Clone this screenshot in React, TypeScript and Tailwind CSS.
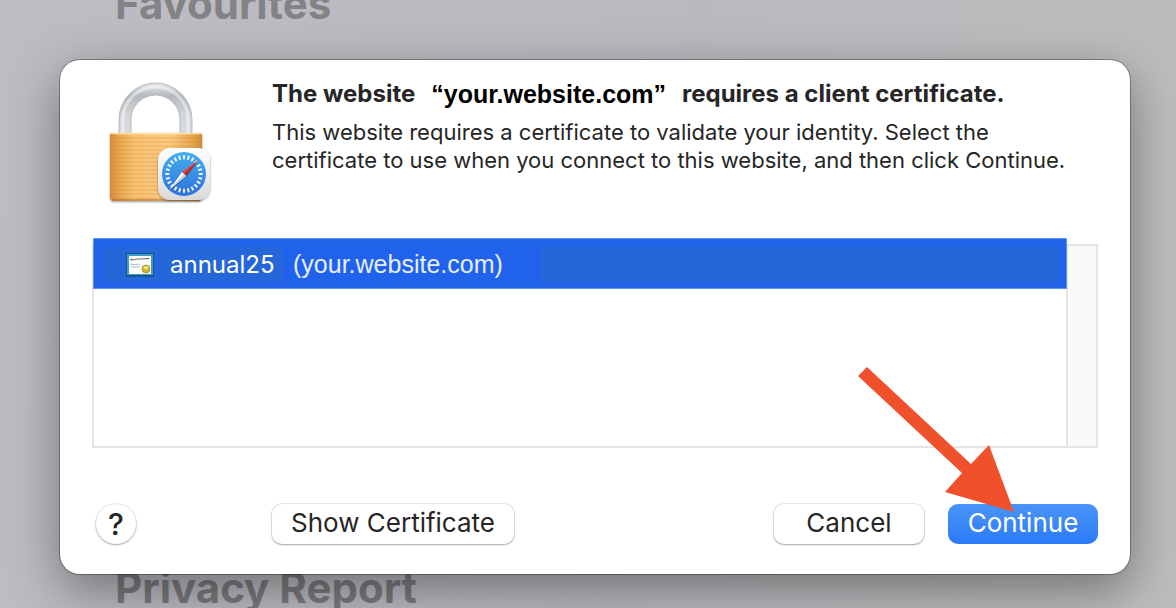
import React from 'react';

const buttonBase =
  'flex h-10 items-center justify-center rounded-[10px] pb-0.5 text-[26px] leading-8';
const buttonPlain =
  'bg-white text-[#262626] shadow-[0_0_0_1px_rgba(0,0,0,0.08),0_1px_2px_rgba(0,0,0,0.3)]';

const ticks = Array.from({ length: 24 }, (_, i) => i * 15);
const grooves = Array.from({ length: 16 }, (_, i) => 57 + i * 4);

const LockIcon: React.FC = () => (
  <svg viewBox="-1 -1 104 124" className="h-[124px] w-[104px] shrink-0" aria-hidden="true">
    <defs>
      <linearGradient id="steel" x1="0" y1="0" x2="0" y2="1">
        <stop offset="0" stopColor="#e9ebed" />
        <stop offset="0.25" stopColor="#b4b9be" />
        <stop offset="0.6" stopColor="#d2d6da" />
        <stop offset="1" stopColor="#d8dbdf" />
      </linearGradient>
      <linearGradient id="brass" x1="0" y1="0" x2="1" y2="0">
        <stop offset="0" stopColor="#d08d35" />
        <stop offset="0.08" stopColor="#e7a34c" />
        <stop offset="0.25" stopColor="#f8c273" />
        <stop offset="0.65" stopColor="#fccb82" />
        <stop offset="0.88" stopColor="#eaa954" />
        <stop offset="1" stopColor="#d08c35" />
      </linearGradient>
      <linearGradient id="tile" x1="0" y1="0" x2="0" y2="1">
        <stop offset="0" stopColor="#ffffff" />
        <stop offset="1" stopColor="#d9d9da" />
      </linearGradient>
      <linearGradient id="dial" x1="0" y1="0" x2="0" y2="1">
        <stop offset="0" stopColor="#45b0ee" />
        <stop offset="1" stopColor="#2f70dc" />
      </linearGradient>
      <filter id="soft" x="-20%" y="-20%" width="140%" height="150%">
        <feDropShadow dx="0" dy="1" stdDeviation="1" floodOpacity="0.4" />
      </filter>
    </defs>

    {/* Shackle */}
    <path
      d="M10 54V38.500a36.500 36.500 0 0 1 73 0V54H71V38.500a24.500 24.500 0 0 0-49 0V54Z"
      fill="url(#steel)"
      stroke="#a7abb0"
      strokeWidth="0.8"
    />
    <path d="M14 54V38.500a32.500 32.500 0 0 1 65 0V54" fill="none" stroke="#fff" strokeWidth="3" opacity="0.45" />

    {/* Body */}
    <g transform="translate(1 0)">
      <path d="M0 52h92v64a4 4 0 0 1-4 4H4a4 4 0 0 1-4-4Z" fill="url(#brass)" filter="url(#soft)" />
      {grooves.map((y) => (
        <path key={y} d={`M0 ${y}h92`} stroke="#c9822b" strokeWidth="1" opacity="0.4" />
      ))}
      <path d="M0 52.500h92" stroke="#ffe3ad" strokeWidth="1.500" />
      <path d="M2 119h88" stroke="#a7662a" strokeWidth="1.500" opacity="0.7" />
    </g>

    {/* Safari badge */}
    <g transform="translate(1 1)">
      <rect x="48" y="66" width="52" height="52" rx="12" fill="url(#tile)" filter="url(#soft)" />
      <circle cx="74" cy="92" r="22" fill="url(#dial)" />
      {ticks.map((angle) => (
        <path
          key={angle}
          d="M74 73.200v4"
          stroke="#fff"
          strokeWidth="2"
          opacity="0.9"
          transform={`rotate(${angle} 74 92)`}
        />
      ))}
      <path d="M61 108L76.500 95L88.500 80L72 91Z" fill="#1d4c94" opacity="0.4" />
      <path d="M88.500 78L72 90L76 94Z" fill="#e8473c" />
      <path d="M88.500 78L74 92L76 94Z" fill="#a32a28" />
      <path d="M60 107L72 90L76 94Z" fill="#fff" />
      <path d="M60 107L74 92L76 94Z" fill="#c9ced4" />
    </g>
  </svg>
);

const CertificateIcon: React.FC = () => (
  <svg viewBox="0 0 28 24" className="h-6 w-7 shrink-0" aria-hidden="true">
    <rect width="28" height="24" rx="0.500" fill="#17558c" />
    <rect x="1" y="1" width="26" height="21" fill="#3f9cc6" />
    <rect x="3" y="3" width="22" height="18" fill="#fbfaf5" />
    <path
      d="M4.500 7c1-2 2-1 1 .2 1 .6 1.500-1.200 2.300-.6s1-1 1.700-.2 1-.8 1.700-.2 1.500-1.400 2-.2 1-.6 1.600 0 1.200-1.300 1.800-.2 1.200-.6 2 0 1.400-.4 4.400-.3"
      fill="none"
      stroke="#444"
      strokeWidth="0.900"
    />
    <path d="M4.500 11.500c2-1 3 1 5 0s2 .5 4-.2M5.500 14c2-1 2 1 4 0s2 1 4 0" fill="none" stroke="#94afd6" strokeWidth="0.900" />
    <circle cx="20" cy="16" r="4" fill="#c9b62e" stroke="#8d7f1b" strokeWidth="0.600" />
    <ellipse cx="20" cy="14.800" rx="2.600" ry="1.700" fill="#efe67f" />
  </svg>
);

const App: React.FC = () => {
  return (
    <div className="relative min-h-screen overflow-hidden bg-[linear-gradient(100deg,#bdbcc2_0%,#bab9bf_55%,#bdbdbd_100%)] pt-[60px] pr-[46px] pb-[34px] pl-[60px] font-['Inter','Liberation_Sans',sans-serif]">
      {/* Start page behind the sheet */}
      <div className="absolute inset-x-0 -top-6 -bottom-2 flex flex-col justify-between px-[115px] text-[42px] leading-[56px] font-bold">
        <h2 className="text-[#838386]">Favourites</h2>
        <h2 className="text-[#7c7c7f]">Privacy Report</h2>
      </div>

      <main className="relative rounded-[20px] bg-white px-8 pt-5 pb-[30px] text-[#262626] shadow-[0_0_0_1px_rgba(0,0,0,0.3),0_16px_50px_rgba(0,0,0,0.4)]">
        <header className="flex gap-[60px] pl-4">
          <LockIcon />
          <div>
            <h1 className="flex flex-wrap gap-x-4 text-[24px] leading-7 font-bold">
              <span>The website</span>
              <span className="font-['Liberation_Sans',sans-serif] text-[25px] text-black">“your.website.com”</span>
              <span>requires a client certificate.</span>
            </h1>
            <p className="mt-2.5 text-[22px] leading-7">
              This website requires a certificate to validate your identity. Select the
              <br />
              certificate to use when you connect to this website, and then click Continue.
            </p>
          </div>
        </header>

        {/* Certificate list */}
        <section className="mt-10 flex h-[204px] border-2 border-[#e4e4e4]">
          <ul className="-mx-px -mt-2 flex-1">
            <li className="relative">
              <button className="flex h-[51px] w-full border border-[#5f93f5] bg-[#2164ea] p-2 text-left text-[24px] text-white">
                <span className="flex h-[35px] w-[181px] items-center gap-4 bg-[#2566d9] pl-6">
                  <CertificateIcon />
                  annual25
                </span>
                <span className="flex h-[35px] w-[258px] items-center bg-[#2062ec] pl-2.5 font-['Liberation_Sans',sans-serif] text-[25px] text-[#e6eefe]">
                  (your.website.com)
                </span>
                <span className="h-[35px] flex-1 bg-[#2566d9]" />
              </button>
            </li>
          </ul>
          <div className="w-[30px] border-l-2 border-[#e4e4e4] bg-[#fafafa]" />
        </section>

        <footer className="mt-14 flex items-center">
          <button
            aria-label="Help"
            className="ml-1 flex size-10 items-center justify-center rounded-full bg-white text-[30px] font-medium text-[#262626] shadow-[0_0_0_1px_rgba(0,0,0,0.08),0_1px_2px_rgba(0,0,0,0.3)]"
          >
            ?
          </button>
          <button className={`${buttonBase} ${buttonPlain} ml-[136px] w-[242px]`}>Show Certificate</button>
          <button className={`${buttonBase} ${buttonPlain} ml-auto w-[150px]`}>Cancel</button>
          <button className={`${buttonBase} ml-6 w-[150px] bg-linear-to-b from-[#4994f8] to-[#2c7af6] text-white`}>
            Continue
          </button>
        </footer>

        {/* Pointer to the Continue button */}
        <svg
          viewBox="0 0 156 146"
          className="pointer-events-none absolute right-[116px] bottom-[62px] h-[146px] w-[156px]"
          aria-hidden="true"
        >
          <path d="M9 1L113 98L131 79L156 146L87 126L104 107L0 10Z" fill="#ef512c" />
        </svg>
      </main>
    </div>
  );
};

export default App;
